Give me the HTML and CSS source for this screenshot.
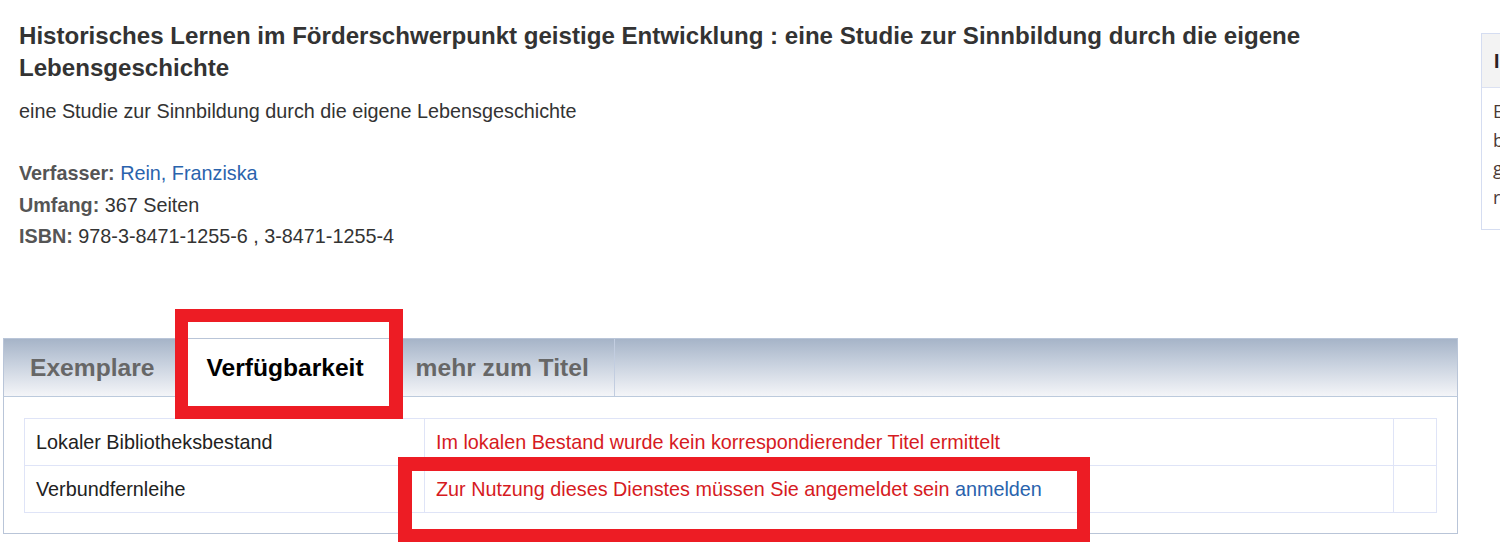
FILE: index.html
```html
<!DOCTYPE html>
<html lang="de">
<head>
<meta charset="utf-8">
<title>Historisches Lernen im Förderschwerpunkt geistige Entwicklung</title>
<link rel="stylesheet" href="styles.css">
</head>
<body>
<div class="page">
  <main class="main">
    <section class="record">
      <h1 class="title">Historisches Lernen im Förderschwerpunkt geistige Entwicklung : eine Studie zur Sinnbildung durch die eigene Lebensgeschichte</h1>
      <p class="subtitle">eine Studie zur Sinnbildung durch die eigene Lebensgeschichte</p>
      <div class="meta">
        <div class="meta-row"><span class="label">Verfasser:</span> <a class="link" href="#">Rein, Franziska</a></div>
        <div class="meta-row"><span class="label">Umfang:</span> 367 Seiten</div>
        <div class="meta-row"><span class="label">ISBN:</span> 978-3-8471-1255-6 , 3-8471-1255-4</div>
      </div>
    </section>

    <div class="tabs">
      <ul class="tab-bar">
        <li class="tab">Exemplare</li>
        <li class="tab tab-active">Verfügbarkeit</li>
        <li class="tab">mehr zum Titel</li>
      </ul>
      <div class="tab-panel">
        <table class="avail">
          <tr>
            <td class="c-name">Lokaler Bibliotheksbestand</td>
            <td class="c-info"><span class="warn">Im lokalen Bestand wurde kein korrespondierender Titel ermittelt</span></td>
            <td class="c-extra"></td>
          </tr>
          <tr>
            <td class="c-name">Verbundfernleihe</td>
            <td class="c-info"><span class="warn">Zur Nutzung dieses Dienstes müssen Sie angemeldet sein</span> <a class="link" href="#">anmelden</a></td>
            <td class="c-extra"></td>
          </tr>
        </table>
      </div>
    </div>
  </main>

  <aside class="side">
    <div class="side-head">Information</div>
    <div class="side-body">Ein Exemplar kann<br>bestellt werden, sobald<br>genügend Angaben<br>registriert sind.</div>
  </aside>
</div>

<div class="mark mark-tab"></div>
<div class="mark mark-login"></div>
</body>
</html>
```

FILE: styles.css
```css
html, body {
  margin: 0;
  padding: 0;
  background: #ffffff;
}

body {
  width: 1500px;
  height: 549px;
  overflow: hidden;
  position: relative;
  font-family: "Liberation Sans", Arial, sans-serif;
  color: #333333;
}

.page {
  display: flex;
  align-items: flex-start;
  padding-left: 3px;
}

.main {
  width: 1455px;
  flex: none;
}

/* ---------- record header ---------- */
.record {
  padding: 20px 0 0 16px;
}

.title {
  margin: 0;
  font-size: 24.1px;
  line-height: 32px;
  font-weight: bold;
  color: #333333;
  padding-right: 100px;
}

.subtitle {
  margin: 11px 0 0;
  font-size: 19.8px;
  line-height: 32px;
  color: #333333;
}

.meta {
  margin-top: 31px;
  font-size: 19.8px;
  line-height: 31.7px;
  color: #333333;
}

.label {
  font-weight: bold;
  color: #555555;
}

.link {
  color: #2a63ad;
  text-decoration: none;
}

/* ---------- tabs ---------- */
.tabs {
  margin-top: 85px;
}

.tab-bar {
  display: flex;
  margin: 0;
  padding: 0;
  list-style: none;
  height: 57px;
  border: 1px solid #b9c5d8;
  border-bottom: 1px solid #bccadc;
  background: linear-gradient(to bottom, #a6b4c8 0%, #c9d2df 45%, #f4f5f8 100%);
}

.tab {
  padding: 0 25px 0 26px;
  height: 57px;
  line-height: 57px;
  font-size: 24.6px;
  font-weight: bold;
  color: #676767;
  border-right: 1px solid #c2cde0;
}

.tab-active {
  background: #ffffff;
  color: #000000;
  height: 58px;
}

.tab-panel {
  border: 1px solid #b9c5d8;
  border-top: none;
  padding: 21px 20px 20px;
}

.avail {
  width: 100%;
  border-collapse: collapse;
  font-size: 19.8px;
}

.avail td {
  height: 46px;
  padding: 0 11px;
  border: 1px solid #dfe4f7;
  vertical-align: middle;
}

.c-name {
  width: 377px;
  color: #222222;
}

.c-extra {
  width: 20px;
}

.warn {
  color: #d61a22;
}

/* ---------- sidebar ---------- */
.side {
  flex: none;
  width: 260px;
  margin-left: 23px;
  margin-top: 33px;
  border: 1px solid #d5ddf1;
  height: 195px;
}

.side-head {
  height: 53px;
  line-height: 55px;
  background: #f3f3f3;
  border-bottom: 1px solid #dbe1f2;
  padding-left: 12px;
  font-size: 19.5px;
  font-weight: bold;
  color: #2b2121;
}

.side-body {
  padding: 9px 11px 0;
  font-family: "Open Sans", "Noto Sans", sans-serif;
  font-size: 18px;
  line-height: 28.5px;
  color: #4a3a36;
}

/* ---------- highlight annotations ---------- */
.mark {
  position: absolute;
  box-sizing: border-box;
  border: 14px solid #ed1c24;
}

.mark-tab {
  left: 175px;
  top: 309px;
  width: 228px;
  height: 110px;
  border-width: 13px 14px 13px 13px;
}

.mark-login {
  left: 398px;
  top: 457px;
  width: 692px;
  height: 85px;
  border-width: 14px 13px 13px 14px;
}
```
